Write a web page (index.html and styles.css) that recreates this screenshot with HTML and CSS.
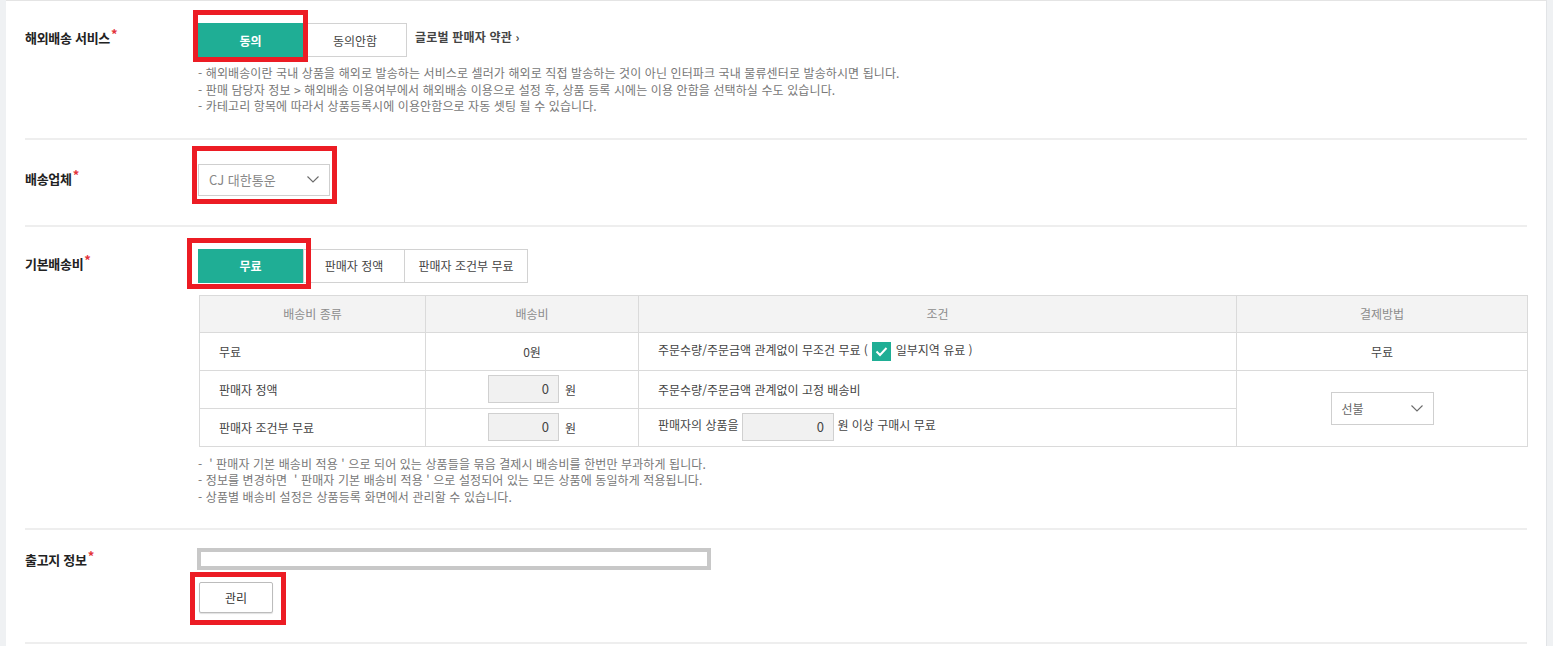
FILE: index.html
```html
<!DOCTYPE html>
<html lang="ko">
<head>
    <meta charset="UTF-8">
    <meta name="viewport" content="width=device-width, initial-scale=1.0">
    <title>배송 정보 설정</title>
    <link rel="stylesheet" href="styles.css">
</head>
<body>

    <div class="panel">

        <!-- 해외배송 서비스 -->
        <div class="form-row row-overseas">
            <div class="row-label">해외배송 서비스<span class="req">*</span></div>
            <div class="row-body">
                <div class="btn-line">
                    <div class="seg">
                        <span class="mark mark-agree"><button class="seg-btn on w105">동의</button></span>
                        <button class="seg-btn w104">동의안함</button>
                    </div>
                    <a class="terms-link" href="#">글로벌 판매자 약관 ›</a>
                </div>
                <ul class="notes notes-top">
                    <li>- 해외배송이란 국내 상품을 해외로 발송하는 서비스로 셀러가 해외로 직접 발송하는 것이 아닌 인터파크 국내 물류센터로 발송하시면 됩니다.</li>
                    <li>- 판매 담당자 정보 &gt; 해외배송 이용여부에서 해외배송 이용으로 설정 후, 상품 등록 시에는 이용 안함을 선택하실 수도 있습니다.</li>
                    <li>- 카테고리 항목에 따라서 상품등록시에 이용안함으로 자동 셋팅 될 수 있습니다.</li>
                </ul>
            </div>
        </div>

        <!-- 배송업체 -->
        <div class="form-row row-company">
            <div class="row-label">배송업체<span class="req">*</span></div>
            <div class="row-body">
                <span class="mark mark-select">
                    <div class="select-box sel-company">
                        <span>CJ 대한통운</span>
                        <svg width="12" height="7" viewBox="0 0 12 7"><polyline points="0.5,0.5 6,6 11.5,0.5" fill="none" stroke="#6b6b6b" stroke-width="1.1"/></svg>
                    </div>
                </span>
            </div>
        </div>

        <!-- 기본배송비 -->
        <div class="form-row row-fee">
            <div class="row-label">기본배송비<span class="req">*</span></div>
            <div class="row-body">
                <div class="seg">
                    <span class="mark mark-free"><button class="seg-btn on w105">무료</button></span>
                    <button class="seg-btn w102">판매자 정액</button>
                    <button class="seg-btn w123">판매자 조건부 무료</button>
                </div>

                <table class="fee-table">
                    <colgroup>
                        <col style="width: 226px">
                        <col style="width: 213px">
                        <col style="width: 598px">
                        <col style="width: 291px">
                    </colgroup>
                    <thead>
                        <tr>
                            <th>배송비 종류</th>
                            <th>배송비</th>
                            <th>조건</th>
                            <th>결제방법</th>
                        </tr>
                    </thead>
                    <tbody>
                        <tr>
                            <td class="c-left">무료</td>
                            <td class="c-center">0원</td>
                            <td class="c-left">
                                주문수량/주문금액 관계없이 무조건 무료 (
                                <span class="check-box"><svg width="19" height="19" viewBox="0 0 19 19"><polyline points="4.5,9.5 8,13 14.5,6" fill="none" stroke="#fff" stroke-width="2"/></svg></span>
                                일부지역 유료 )
                            </td>
                            <td class="c-center">무료</td>
                        </tr>
                        <tr>
                            <td class="c-left">판매자 정액</td>
                            <td class="c-center"><span class="num-input">0</span><span class="unit">원</span></td>
                            <td class="c-left">주문수량/주문금액 관계없이 고정 배송비</td>
                            <td class="c-center" rowspan="2">
                                <div class="select-box sel-pay">
                                    <span>선불</span>
                                    <svg width="12" height="7" viewBox="0 0 12 7"><polyline points="0.5,0.5 6,6 11.5,0.5" fill="none" stroke="#6b6b6b" stroke-width="1.1"/></svg>
                                </div>
                            </td>
                        </tr>
                        <tr>
                            <td class="c-left">판매자 조건부 무료</td>
                            <td class="c-center"><span class="num-input">0</span><span class="unit">원</span></td>
                            <td class="c-left">판매자의 상품을 <span class="num-input wide">0</span> 원 이상 구매시 무료</td>
                        </tr>
                    </tbody>
                </table>

                <ul class="notes notes-table">
                    <li>- &nbsp;' 판매자 기본 배송비 적용 ' 으로 되어 있는 상품들을 묶음 결제시 배송비를 한번만 부과하게 됩니다.</li>
                    <li>- 정보를 변경하면 &nbsp;' 판매자 기본 배송비 적용 ' 으로 설정되어 있는 모든 상품에 동일하게 적용됩니다.</li>
                    <li>- 상품별 배송비 설정은 상품등록 화면에서 관리할 수 있습니다.</li>
                </ul>
            </div>
        </div>

        <!-- 출고지 정보 -->
        <div class="form-row row-address">
            <div class="row-label">출고지 정보<span class="req">*</span></div>
            <div class="row-body">
                <div class="address-box"></div>
                <span class="mark mark-manage"><button class="manage-btn">관리</button></span>
            </div>
        </div>

    </div>

</body>
</html>
```

FILE: styles.css
```css
* {
    box-sizing: border-box;
}

html, body {
    margin: 0;
    padding: 0;
    height: 100%;
    overflow: hidden;
}

body {
    font-family: "Noto Sans CJK KR", "Noto Sans", sans-serif;
    font-size: 12px;
    color: #333;
    background-color: #eff1f3;
}

.panel {
    margin-left: 6px;
    width: 1541px;
    min-height: 100vh;
    background-color: #fff;
    border-top: 1px solid #e4e4e4;
    border-right: 1px solid #e2e4e7;
    padding: 0 19px;
}

.form-row {
    display: flex;
    border-bottom: 2px solid #eeeeee;
}

.row-label {
    width: 173px;
    flex-shrink: 0;
    padding-top: 5px;
    font-size: 13px;
    letter-spacing: -0.3px;
    font-weight: bold;
    line-height: 20px;
    color: #222;
}

.req {
    color: #e3343a;
    font-size: 13px;
    vertical-align: top;
    line-height: 12px;
    margin-left: 1px;
}

.row-body {
    flex: 1;
}

.row-overseas {
    padding: 22px 0 23px;
}

.row-company {
    padding: 24px 0 29px;
}

.row-fee {
    padding: 22px 0 23px;
}

.row-address {
    padding: 18px 0 29px;
}

.row-address .row-label {
    padding-top: 2px;
}

/* 버튼 그룹 */
.btn-line {
    display: flex;
    align-items: center;
}

.seg {
    display: flex;
}

.seg-btn {
    height: 34px;
    border: 1px solid #d2d2d2;
    background-color: #fff;
    font-family: inherit;
    font-size: 12px;
    color: #444;
    padding: 0;
    margin: 0;
    cursor: pointer;
}

.seg-btn + .seg-btn {
    border-left: none;
}

.seg-btn.on {
    background-color: #1fae95;
    border-color: #1fae95;
    color: #fff;
    font-weight: bold;
}

.w105 { width: 105px; }
.w104 { width: 104px; }
.w102 { width: 102px; }
.w123 { width: 123px; }

.terms-link {
    margin-left: 8px;
    margin-top: -7px;
    font-size: 12px;
    letter-spacing: 0.2px;
    font-weight: bold;
    color: #444;
    text-decoration: none;
}

/* 빨간 강조 박스 */
.mark {
    position: relative;
    display: inline-block;
    vertical-align: top;
}

.mark::after {
    content: '';
    position: absolute;
    border: 5px solid #ec1c24;
    pointer-events: none;
}

.mark-agree::after {
    top: -13px;
    left: -5px;
    right: -5px;
    bottom: -5px;
}

.mark-select::after {
    top: -18px;
    left: -6px;
    right: -7px;
    bottom: -8px;
}

.mark-free::after {
    top: -11px;
    left: -11px;
    right: -8px;
    bottom: -6px;
}

.mark-manage::after {
    top: -10px;
    left: -9px;
    right: -13px;
    bottom: -12px;
}

/* 안내 문구 */
.notes {
    list-style: none;
    margin: 0;
    padding: 0;
    font-size: 12px;
    letter-spacing: 0.1px;
    line-height: 16.5px;
    color: #777;
}

.notes-top {
    margin-top: 8px;
}

.notes-table {
    margin-top: 9px;
}

/* 셀렉트 */
.select-box {
    display: flex;
    align-items: center;
    justify-content: space-between;
    height: 32px;
    border: 1px solid #cfcfcf;
    background-color: #fff;
    color: #888;
    font-size: 13px;
}

.sel-company {
    width: 132px;
    padding: 0 10px 0 10px;
}

.sel-pay {
    width: 103px;
    height: 33px;
    margin: 0 auto;
    padding: 0 10px 0 10px;
    color: #666;
    font-size: 12px;
}

/* 배송비 테이블 */
.fee-table {
    width: 1328px;
    margin-top: 12px;
    margin-left: 1px;
    border-collapse: collapse;
    table-layout: fixed;
}

.fee-table th,
.fee-table td {
    border: 1px solid #dadada;
    padding: 0;
    font-size: 12px;
}

.fee-table th {
    height: 37px;
    background-color: #f3f3f3;
    color: #8c8c8c;
    font-weight: normal;
}

.fee-table td {
    height: 38px;
    color: #444;
}

.c-left {
    padding-left: 19px !important;
    text-align: left;
}

.c-center {
    text-align: center;
}

.num-input {
    display: inline-block;
    vertical-align: middle;
    width: 71px;
    height: 28px;
    line-height: 26px;
    border: 1px solid #d0d0d0;
    background-color: #f1f1f1;
    text-align: right;
    padding-right: 9px;
    font-size: 13px;
    color: #444;
}

.num-input.wide {
    width: 92px;
}

.unit {
    display: inline-block;
    vertical-align: middle;
    margin-left: 6px;
}

.check-box {
    display: inline-block;
    vertical-align: middle;
    width: 19px;
    height: 19px;
    margin: -2px 1px 0;
    background-color: #1fae95;
}

.check-box svg {
    display: block;
}

/* 출고지 */
.address-box {
    width: 514px;
    height: 22px;
    margin-left: -1px;
    border: 4px solid #c8c8c8;
    background-color: #fff;
}

.mark-manage {
    margin-top: 12px;
    margin-left: 1px;
}

.manage-btn {
    display: block;
    width: 74px;
    height: 31px;
    border: 1px solid #bcbcbc;
    border-radius: 2px;
    background-color: #fff;
    box-shadow: 0 1px 1px rgba(0, 0, 0, 0.12);
    font-family: inherit;
    font-size: 12px;
    color: #333;
    padding: 0;
    cursor: pointer;
}
```
